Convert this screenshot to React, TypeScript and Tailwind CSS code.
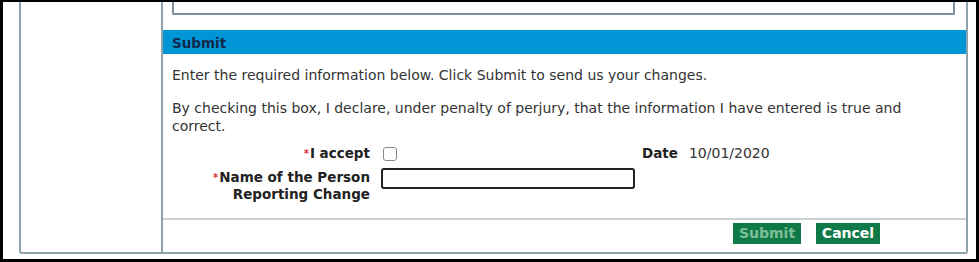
import { useState } from "react";

// Bottom of a change-report form: the submit section with the perjury
// declaration, the accept box, the reporter's name and the action buttons.
const font = { fontFamily: '"DejaVu Sans", Verdana, sans-serif' };

function Req() {
  return <span className="mr-[1px] align-top text-[10px] text-[#e0303a]">*</span>;
}

export default function App() {
  const [accepted, setAccepted] = useState(false);
  const [name, setName] = useState("");

  return (
    <div
      style={font}
      className="box-border flex h-[262px] w-[979px] border-t-2 border-r-[3px] border-b-[3px] border-l-[3px] border-black bg-white pr-[8px] pb-[5px] pl-[16px] text-[14px] text-[#333]"
    >
      <div className="flex flex-1 rounded-bl-[3px] rounded-br-[3px] border-r-2 border-b-2 border-l-2 border-[#8fa3ad]">
        <div className="w-[142px] shrink-0 border-r-2 border-[#8fa3ad]" />

        <div className="flex min-w-0 flex-1 flex-col">
          <div className="mr-[11px] ml-[9px] h-[13px] rounded-b-[2px] border-r-2 border-b-2 border-l-2 border-[#7d8f99]" />

          <div className="mt-[15px] flex h-[24px] items-center bg-[#0096d6] px-[9px] pt-[2px] text-[13.5px] font-bold text-[#10284a]">
            Submit
          </div>

          <div className="pt-[12px] pr-[40px] pl-[9px] leading-[18px]">
            <p>Enter the required information below. Click Submit to send us your changes.</p>
            <p className="mt-[15px]">
              By checking this box, I declare, under penalty of perjury, that the information I have
              entered is true and correct.
            </p>
          </div>

          <div className="mt-[10px] grid grid-cols-[218px_261px_1fr] text-[13.5px] leading-[17px]">
            <div className="pr-[11px] text-right font-bold text-[#222]">
              <Req />I accept
            </div>
            <div className="flex items-center">
              <input
                type="checkbox"
                checked={accepted}
                onChange={(e) => setAccepted(e.target.checked)}
                className="ml-[2px] h-[14px] w-[14px] appearance-none rounded-[3px] border border-[#8a8a8a] bg-white checked:bg-[#0096d6]"
              />
            </div>
            <div>
              <span className="font-bold text-[#222]">Date</span>
              <span className="ml-[11px] text-[14px]">10/01/2020</span>
            </div>

            <div className="mt-[7px] pr-[11px] text-right font-bold text-[#222]">
              <Req />Name of the Person
              <br />
              Reporting Change
            </div>
            <div className="mt-[6px]">
              <input
                value={name}
                onChange={(e) => setName(e.target.value)}
                className="h-[21px] w-[254px] rounded-[3px] border-2 border-[#222] bg-white px-1 text-[12px] outline-none"
              />
            </div>
            <div />
          </div>

          <div className="mt-auto flex h-[34px] justify-end gap-[15px] border-t-2 border-[#c9d1d5] pt-[3px] pr-[86px]">
            <button
              disabled={!accepted || !name.trim()}
              className="h-[21px] w-[68px] bg-[#0f7a48] text-[14px] font-bold text-white disabled:text-[#7fbf98]"
            >
              Submit
            </button>
            <button className="h-[21px] w-[64px] bg-[#0f7a48] text-[14px] font-bold text-white">
              Cancel
            </button>
          </div>
        </div>
      </div>
    </div>
  );
}
